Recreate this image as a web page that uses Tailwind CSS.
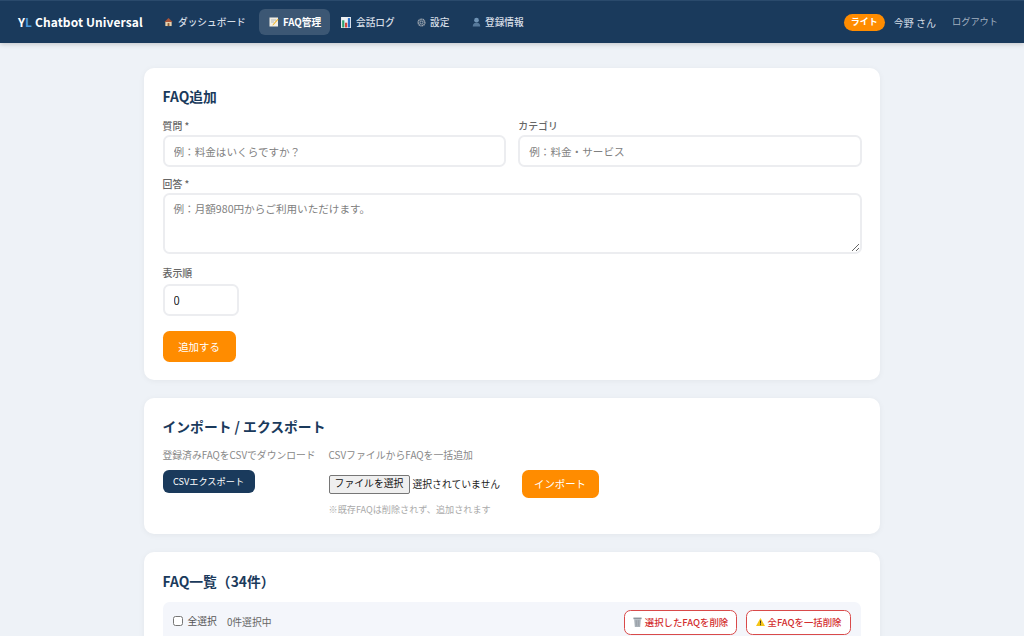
<!DOCTYPE html>
<html lang="ja">
<head>
  <meta charset="UTF-8">
  <title>FAQ管理</title>
  <script src="https://cdn.jsdelivr.net/npm/@tailwindcss/browser@4"></script>
</head>
<body class="bg-[#eef2f7] h-[636px] overflow-hidden font-['Noto_Sans_CJK_JP','Noto_Sans',sans-serif] text-[#333]">
  <!-- nav -->
  <header class="h-[43px] bg-[#1a3a5c] border-t border-t-[#2a4a6c] shadow-[0_1px_5px_rgba(0,0,0,0.2)] flex items-center justify-between pl-[18px] pr-[26px]">
    <div class="flex items-center">
      <div class="w-[145px] text-[12px] font-bold text-white tracking-[0.1px] whitespace-nowrap">Y<span class="text-[#4a9ade]">L</span> Chatbot Universal</div>
      <nav class="flex items-center text-[9.7px] font-medium text-[#d5dde6] whitespace-nowrap">
        <a class="flex items-center gap-[5px] w-[96px] h-[26px] pl-[1px]">
          <svg class="w-[9px] h-[10px]" viewBox="0 0 10 10"><path d="M5 0.5 L9.6 5 H0.4Z" fill="#a8553a"/><rect x="1.5" y="5" width="7" height="4.5" fill="#e8d2ae"/><rect x="4" y="6.2" width="2" height="3.3" fill="#8a5a34"/></svg>
          <span>ダッシュボード</span>
        </a>
        <a class="flex items-center gap-[4px] w-[71px] h-[26px] pl-[10px] rounded-[6px] bg-white/15 text-white font-semibold">
          <svg class="w-[10px] h-[10px]" viewBox="0 0 10 10"><rect x="0.5" y="0.5" width="8.5" height="9" fill="#f3efe4"/><path d="M2 3h5M2 5h3" stroke="#9aa3ad" stroke-width="0.7"/><path d="M9.5 2.5 L4.5 8 L3.5 8.8 L3.8 7.4 L8.6 1.8Z" fill="#f0b429"/></svg>
          <span>FAQ管理</span>
        </a>
        <a class="flex items-center gap-[5px] w-[76px] h-[26px] pl-[11px]">
          <svg class="w-[10px] h-[11px]" viewBox="0 0 9 10"><rect width="9" height="10" fill="#eef1f4"/><rect x="1" y="3" width="2" height="6.5" fill="#2f9e6e"/><rect x="3.6" y="5.2" width="2" height="4.3" fill="#d8453a"/><rect x="6.2" y="1" width="2" height="8.5" fill="#2b6cc4"/></svg>
          <span>会話ログ</span>
        </a>
        <a class="flex items-center gap-[4px] w-[55px] h-[26px] pl-[11px]">
          <svg class="w-[9px] h-[9px]" viewBox="0 0 10 10"><circle cx="5" cy="5" r="3.6" fill="none" stroke="#9aa3ad" stroke-width="1.8" stroke-dasharray="1.3 0.5"/><circle cx="5" cy="5" r="1.6" fill="none" stroke="#c2c9d0" stroke-width="0.8"/></svg>
          <span>設定</span>
        </a>
        <a class="flex items-center gap-[4px] h-[26px] pl-[11px]">
          <svg class="w-[9px] h-[10px]" viewBox="0 0 10 10"><circle cx="5" cy="3" r="2.6" fill="#6f93b5"/><path d="M0.8 10 C1 6.5 3 5.8 5 5.8 C7 5.8 9 6.5 9.2 10Z" fill="#56799b"/></svg>
          <span>登録情報</span>
        </a>
      </nav>
    </div>
    <div class="flex items-center whitespace-nowrap">
      <span class="w-[41px] h-[17px] flex items-center justify-center rounded-full bg-[#ff8c00] text-white text-[9px] font-bold">ライト</span>
      <span class="ml-[9px] text-[10px] text-[#d5dde6]">今野 さん</span>
      <a class="ml-[16px] text-[9.2px] text-[#a3b1c0]">ログアウト</a>
    </div>
  </header>

  <main class="w-[736px] mx-auto pt-[25px] flex flex-col gap-[18px]">
    <!-- add -->
    <section class="h-[312px] bg-white rounded-[10px] shadow-[0_1px_6px_rgba(0,0,0,0.05)] pl-[18.5px] pr-[18px] pt-[18px]">
      <h2 class="text-[13.8px] leading-[20px] font-bold text-[#1a3a5c]">FAQ追加</h2>
      <div class="mt-[13px] grid grid-cols-2 gap-x-[12px]">
        <div>
          <label class="block text-[9.9px] leading-[14px] font-medium text-[#666]">質問 *</label>
          <input placeholder="例：料金はいくらですか？" class="mt-[2px] block w-full h-[32px] px-[9px] bg-white border-2 border-[#ecedf0] rounded-[6.5px] text-[10.6px] placeholder:text-[#808080]">
        </div>
        <div>
          <label class="block text-[9.9px] leading-[14px] font-medium text-[#666]">カテゴリ</label>
          <input placeholder="例：料金・サービス" class="mt-[2px] block w-full h-[32px] px-[9px] bg-white border-2 border-[#ecedf0] rounded-[6.5px] text-[10.6px] placeholder:text-[#808080]">
        </div>
      </div>
      <label class="mt-[10px] block text-[9.9px] leading-[14px] font-medium text-[#666]">回答 *</label>
      <textarea placeholder="例：月額980円からご利用いただけます。" class="mt-[2px] block w-full h-[61px] px-[9px] py-[6px] bg-white border-2 border-[#ecedf0] rounded-[6.5px] text-[10.6px] leading-[16px] placeholder:text-[#808080]"></textarea>
      <label class="mt-[12px] block text-[9.9px] leading-[14px] font-medium text-[#666]">表示順</label>
      <input value="0" class="mt-[4px] block w-[76px] h-[32px] px-[9px] bg-white border-2 border-[#ecedf0] rounded-[6.5px] text-[11.2px] text-[#222]">
      <button class="mt-[15px] block w-[73px] h-[31px] bg-[#ff8c00] text-white rounded-[6.5px] text-[10.4px]">追加する</button>
    </section>

    <!-- csv -->
    <section class="h-[136px] bg-white rounded-[10px] shadow-[0_1px_6px_rgba(0,0,0,0.05)] pl-[18.5px] pr-[18px] pt-[18px]">
      <h2 class="text-[13.8px] leading-[20px] font-bold text-[#1a3a5c]">インポート / エクスポート</h2>
      <div class="mt-[12px] flex">
        <div class="w-[166px]">
          <p class="text-[9.8px] leading-[15px] text-[#888] whitespace-nowrap">登録済みFAQをCSVでダウンロード</p>
          <button class="mt-[7px] block w-[92px] h-[23px] bg-[#1a3a5c] text-white rounded-[6px] text-[9.2px]">CSVエクスポート</button>
        </div>
        <div>
          <p class="text-[9.9px] leading-[15px] text-[#888] whitespace-nowrap">CSVファイルからFAQを一括追加</p>
          <div class="mt-[7px] flex items-center h-[28px]">
            <button class="w-[81px] h-[19px] bg-[#efefef] border border-[#767676] rounded-[2px] text-[9.85px] leading-none text-[#111]">ファイルを選択</button>
            <span class="ml-[3px] w-[109px] text-[9.8px] text-[#222] whitespace-nowrap">選択されていません</span>
            <button class="w-[77px] h-[28px] bg-[#ff8c00] text-white rounded-[6.5px] text-[10.4px]">インポート</button>
          </div>
          <p class="mt-[4px] text-[9.15px] leading-[14px] text-[#aaa] whitespace-nowrap">※既存FAQは削除されず、追加されます</p>
        </div>
      </div>
    </section>

    <!-- list -->
    <section class="h-[200px] bg-white rounded-[10px] shadow-[0_1px_6px_rgba(0,0,0,0.05)] pl-[18.5px] pr-[19px] pt-[19px]">
      <h2 class="text-[13.8px] leading-[20px] font-bold text-[#1a3a5c]">FAQ一覧（34件）</h2>
      <div class="mt-[11px] h-[40px] bg-[#f4f6fb] rounded-[6.5px] flex items-center justify-between pl-[10px] pr-[10px]">
        <div class="flex items-center text-[9.8px] text-[#555] whitespace-nowrap">
          <input type="checkbox" class="w-[10px] h-[10px] -mt-[3px]">
          <span class="ml-[5px] -mt-[2px]">全選択</span>
          <span class="ml-[10px] text-[#666]">0件選択中</span>
        </div>
        <div class="flex items-center gap-[9px] text-[9.4px] font-medium text-[#d32f2f] whitespace-nowrap">
          <button class="flex items-center justify-center gap-[3px] w-[113px] h-[25px] bg-white border border-[#d94a4a] rounded-[6.5px]">
            <svg class="w-[9px] h-[10px]" viewBox="0 0 8 9"><rect x="0.3" y="0.5" width="7.4" height="1.5" fill="#8e969d"/><path d="M1 2h6l-0.6 7H1.6Z" fill="#a9b1b8"/><path d="M3 3v5M5 3v5" stroke="#8e969d" stroke-width="0.5"/></svg>
            <span>選択したFAQを削除</span>
          </button>
          <button class="flex items-center justify-center gap-[3px] w-[105px] h-[25px] bg-white border border-[#d94a4a] rounded-[6.5px]">
            <svg class="w-[9px] h-[8px]" viewBox="0 0 9 8"><path d="M4.5 0 L9 8 H0Z" fill="#f5c518"/><path d="M4.5 2.6v3M4.5 6.2v1" stroke="#222" stroke-width="0.9"/></svg>
            <span>全FAQを一括削除</span>
          </button>
        </div>
      </div>
    </section>
  </main>
</body>
</html>
